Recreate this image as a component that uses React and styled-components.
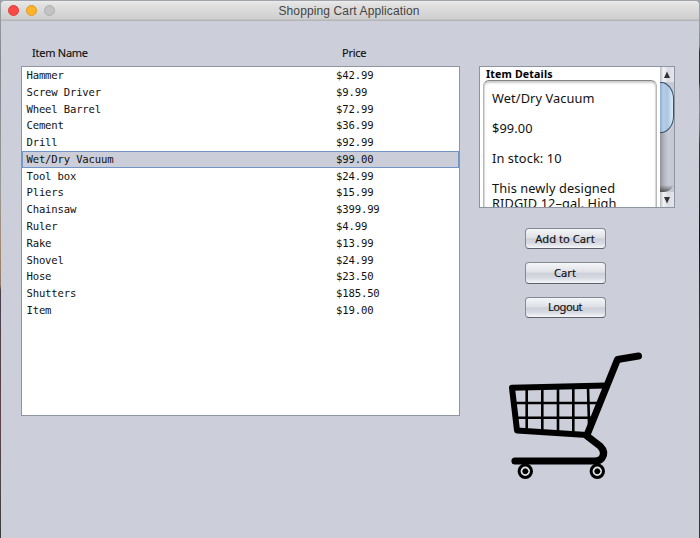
import React from "react";
import styled, { createGlobalStyle } from "styled-components";

const Global = createGlobalStyle`
  * { box-sizing: border-box; }
  body { margin: 0; overflow: hidden; }
`;

const ui = '"Noto Sans", "Open Sans", sans-serif';

const Desktop = styled.div`
  display: flex;
  width: 700px;
  height: 538px;
  padding: 1px 1px 0;
  background: linear-gradient(#9ba1a7 0, #9aa1a6 18px, #85898d 45px, #303034 52px, #2d2c30 82px, #77777a 90px, #8a8a8c 110px, #707074 130px, #34343e 145px, #22222a 190px, #141416 240px, #3a3c42 330px, #34363c 100%) right / 1px 100% no-repeat,
    linear-gradient(#9ba1a7 0, #85888e 60px, #9a9896 190px, #a28a70 250px, #8d7b68 285px, #4a4048 290px, #5b4148 420px, #4b4548 480px, #3c3a3c 100%) left / 1px 100% no-repeat,
    #a0a5ac;
`;

const Window = styled.main`
  flex: 1;
  display: flex;
  flex-direction: column;
  overflow: hidden;
  border-radius: 4px 4px 0 0;
  background: #cccfd9;
  font-family: ${ui};
  color: #111;
`;

const TitleBar = styled.header`
  display: grid;
  grid-template-columns: 80px 1fr 80px;
  align-items: center;
  height: 20px;
  flex: none;
  padding: 0 0 0 7px;
  background: linear-gradient(#ebebeb, #e2e2e2 15%, #cecece 92%, #b5b5b7 93%);
`;

const Lights = styled.div`
  display: flex;
  gap: 7px;
  margin-top: -1px;
`;

const Light = styled.i`
  width: 11px;
  height: 11px;
  border-radius: 50%;
  background: ${(p) => p.$fill};
  border: 1px solid ${(p) => p.$edge};
`;

const Title = styled.h1`
  margin: 0 0 0 -9px;
  text-align: center;
  font: 400 12px/19px "Liberation Sans", Arial, sans-serif;
  letter-spacing: 0.12px;
  color: #444;
`;

const Content = styled.div`
  display: grid;
  grid-template-columns: 439px 196px;
  column-gap: 19px;
  align-items: start;
  padding: 24px 0 0 20px;
`;

const Catalog = styled.section`
  display: flex;
  flex-direction: column;
`;

const columns = `
  display: grid;
  grid-template-columns: 310px 1fr;
`;

const Headings = styled.div`
  ${columns}
  height: 21px;
  padding-left: 11px;
  font-size: 11px;
  line-height: 15px;
  letter-spacing: -0.25px;
  -webkit-text-stroke: 0.15px #111;
`;

const List = styled.ul`
  margin: 0;
  padding: 0;
  height: 350px;
  list-style: none;
  background: #fff;
  border: 1px solid #8f94a2;
`;

const Row = styled.li`
  ${columns}
  grid-template-columns: 309.6px 1fr;
  height: 16.79px;
  padding: 0 0 0 4.5px;
  font: 10.6px/17.6px "DejaVu Sans Mono", monospace;
  letter-spacing: -0.17px;
  color: #111;
  background: ${(p) => (p.$selected ? "#cbced8" : "transparent")};
  box-shadow: ${(p) => (p.$selected ? "inset 0 0 0 1px #7195c6" : "none")};
`;

const Side = styled.aside`
  display: flex;
  flex-direction: column;
  align-items: center;
  padding-top: 21px;
`;

const Details = styled.section`
  display: grid;
  grid-template-columns: 1fr 14px;
  width: 196px;
  height: 142px;
  overflow: hidden;
  background: #fff;
  border: 1px solid #8f94a2;
`;

const DetailBody = styled.div`
  display: flex;
  flex-direction: column;
  height: 140px;
  overflow: hidden;
  padding: 0 3px;
`;

const Legend = styled.h2`
  margin: 0 0 0 3px;
  height: 13px;
  flex: none;
  font: 700 10.6px/14px ${ui};
  letter-spacing: 0.16px;
  color: #000;
  white-space: nowrap;
`;

const Card = styled.div`
  flex: none;
  height: 150px;
  padding: 10px 0 0 8px;
  border: 1px solid #8d8d8d;
  border-width: 1.5px 1px 0;
  border-color: #858585 #b8b8b8;
  border-radius: 6px 6px 0 0;
  box-shadow: inset 0 2px 2px #ccc, inset 1px 0 1px #ddd, inset -1px 0 1px #ddd;
  font-size: 12.8px;
  line-height: 15px;
  letter-spacing: 0.1px;
  white-space: nowrap;
`;

const Line = styled.p`
  margin: 0 0 15px;
`;

const ScrollBar = styled.div`
  display: flex;
  flex-direction: column;
  background: linear-gradient(90deg, #8e919b, #b5b8c2 30%, #c9ccd6 60%, #c6c9d3);
`;

const Arrow = styled.div`
  display: flex;
  align-items: center;
  justify-content: center;
  height: 15px;
  background: linear-gradient(90deg, #b9bcc6, #f1f2f5 25%, #d9dce3 60%, #e6e7ec);
`;

const Thumb = styled.div`
  height: 51px;
  border: 1.5px solid #36516a;
  border-left: 0;
  border-radius: 0 13px 13px 0 / 0 17px 17px 0;
  background: linear-gradient(90deg, #8eaed0, #b7cee6 28%, #a8c5e0 55%, #dcedfa);
`;

const Track = styled.div`
  flex: 1;
  border-radius: 0 0 10px 0;
  background: linear-gradient(transparent calc(100% - 7px), #333b 100%);
`;

const Actions = styled.div`
  display: flex;
  flex-direction: column;
  gap: 13px;
  margin: 20px 24px 0 0;
`;

const Button = styled.button`
  width: 81px;
  height: 21.4px;
  padding: 0;
  border: 1px solid #858994;
  border-bottom-color: #5d616c;
  border-radius: 4px;
  background: linear-gradient(#f5f6f8, #dfe1e7 45%, #cdd0d9 52%, #d8dae2 75%, #f5f7fb);
  font: 11.2px/18px ${ui};
  letter-spacing: ${(p) => p.$spacing || 0}px;
  color: #111;
  -webkit-text-stroke: 0.15px #111;
`;

const CartArt = styled.svg`
  display: block;
  width: 170px;
  height: 150px;
  margin: 21.8px 0 0 -4px;
`;

const items = [
  ["Hammer", "$42.99"],
  ["Screw Driver", "$9.99"],
  ["Wheel Barrel", "$72.99"],
  ["Cement", "$36.99"],
  ["Drill", "$92.99"],
  ["Wet/Dry Vacuum", "$99.00"],
  ["Tool box", "$24.99"],
  ["Pliers", "$15.99"],
  ["Chainsaw", "$399.99"],
  ["Ruler", "$4.99"],
  ["Rake", "$13.99"],
  ["Shovel", "$24.99"],
  ["Hose", "$23.50"],
  ["Shutters", "$185.50"],
  ["Item", "$19.00"],
];

function Triangle({ down }) {
  return (
    <svg width="8" height="8" viewBox="0 0 8 8">
      <path d={down ? "M1 1h6L4 7.5z" : "M1 7h6L4 .5z"} fill="#333" />
    </svg>
  );
}

function Wheel({ x }) {
  return (
    <g>
      <circle cx={x} cy="131.3" r="6.2" fill="#e3e4e9" stroke="#000" strokeWidth="3" />
      <circle cx={x} cy="131.3" r="2.5" fill="#000" />
    </g>
  );
}

function Cart() {
  return (
    <CartArt viewBox="0 0 170 150" fill="none" stroke="#000" strokeLinecap="round" strokeLinejoin="round">
      <path d="M148.5 16 127.5 19.5 97 95" strokeWidth="7" />
      <path d="M116 45.5 22 47.8 27 90.5 97 95" strokeWidth="6" />
      <path d="M97 96 110 106Q116 112 112 118 110 121 105 121H25" strokeWidth="7.2" />
      <path d="M36.7 48V90M52.3 48V91M68 48V92M83.3 47V93M98 47 99 84M25 63H108M26 77.7H102" strokeWidth="2.6" />
      <Wheel x={35.3} />
      <Wheel x={107.3} />
    </CartArt>
  );
}

export default function App() {
  return (
    <Desktop>
      <Global />
      <Window>
        <TitleBar>
          <Lights>
            <Light $fill="#f94a48" $edge="#df3d3b" />
            <Light $fill="#fdb32a" $edge="#dd9925" />
            <Light $fill="#c3c3c3" $edge="#aeaeae" />
          </Lights>
          <Title>Shopping Cart Application</Title>
        </TitleBar>
        <Content>
          <Catalog>
            <Headings>
              <span>Item Name</span>
              <span>Price</span>
            </Headings>
            <List>
              {items.map(([name, price]) => (
                <Row key={name} $selected={name === "Wet/Dry Vacuum"}>
                  <span>{name}</span>
                  <span>{price}</span>
                </Row>
              ))}
            </List>
          </Catalog>
          <Side>
            <Details>
              <DetailBody>
                <Legend>Item Details</Legend>
                <Card>
                  <Line>Wet/Dry Vacuum</Line>
                  <Line>$99.00</Line>
                  <Line>In stock: 10</Line>
                  <Line>
                    This newly designed
                    <br />
                    RIDGID 12–gal. High
                  </Line>
                </Card>
              </DetailBody>
              <ScrollBar>
                <Arrow>
                  <Triangle />
                </Arrow>
                <Thumb />
                <Track />
                <Arrow>
                  <Triangle down />
                </Arrow>
              </ScrollBar>
            </Details>
            <Actions>
              <Button>Add to Cart</Button>
              <Button>Cart</Button>
              <Button $spacing={-0.5}>Logout</Button>
            </Actions>
            <Cart />
          </Side>
        </Content>
      </Window>
    </Desktop>
  );
}
